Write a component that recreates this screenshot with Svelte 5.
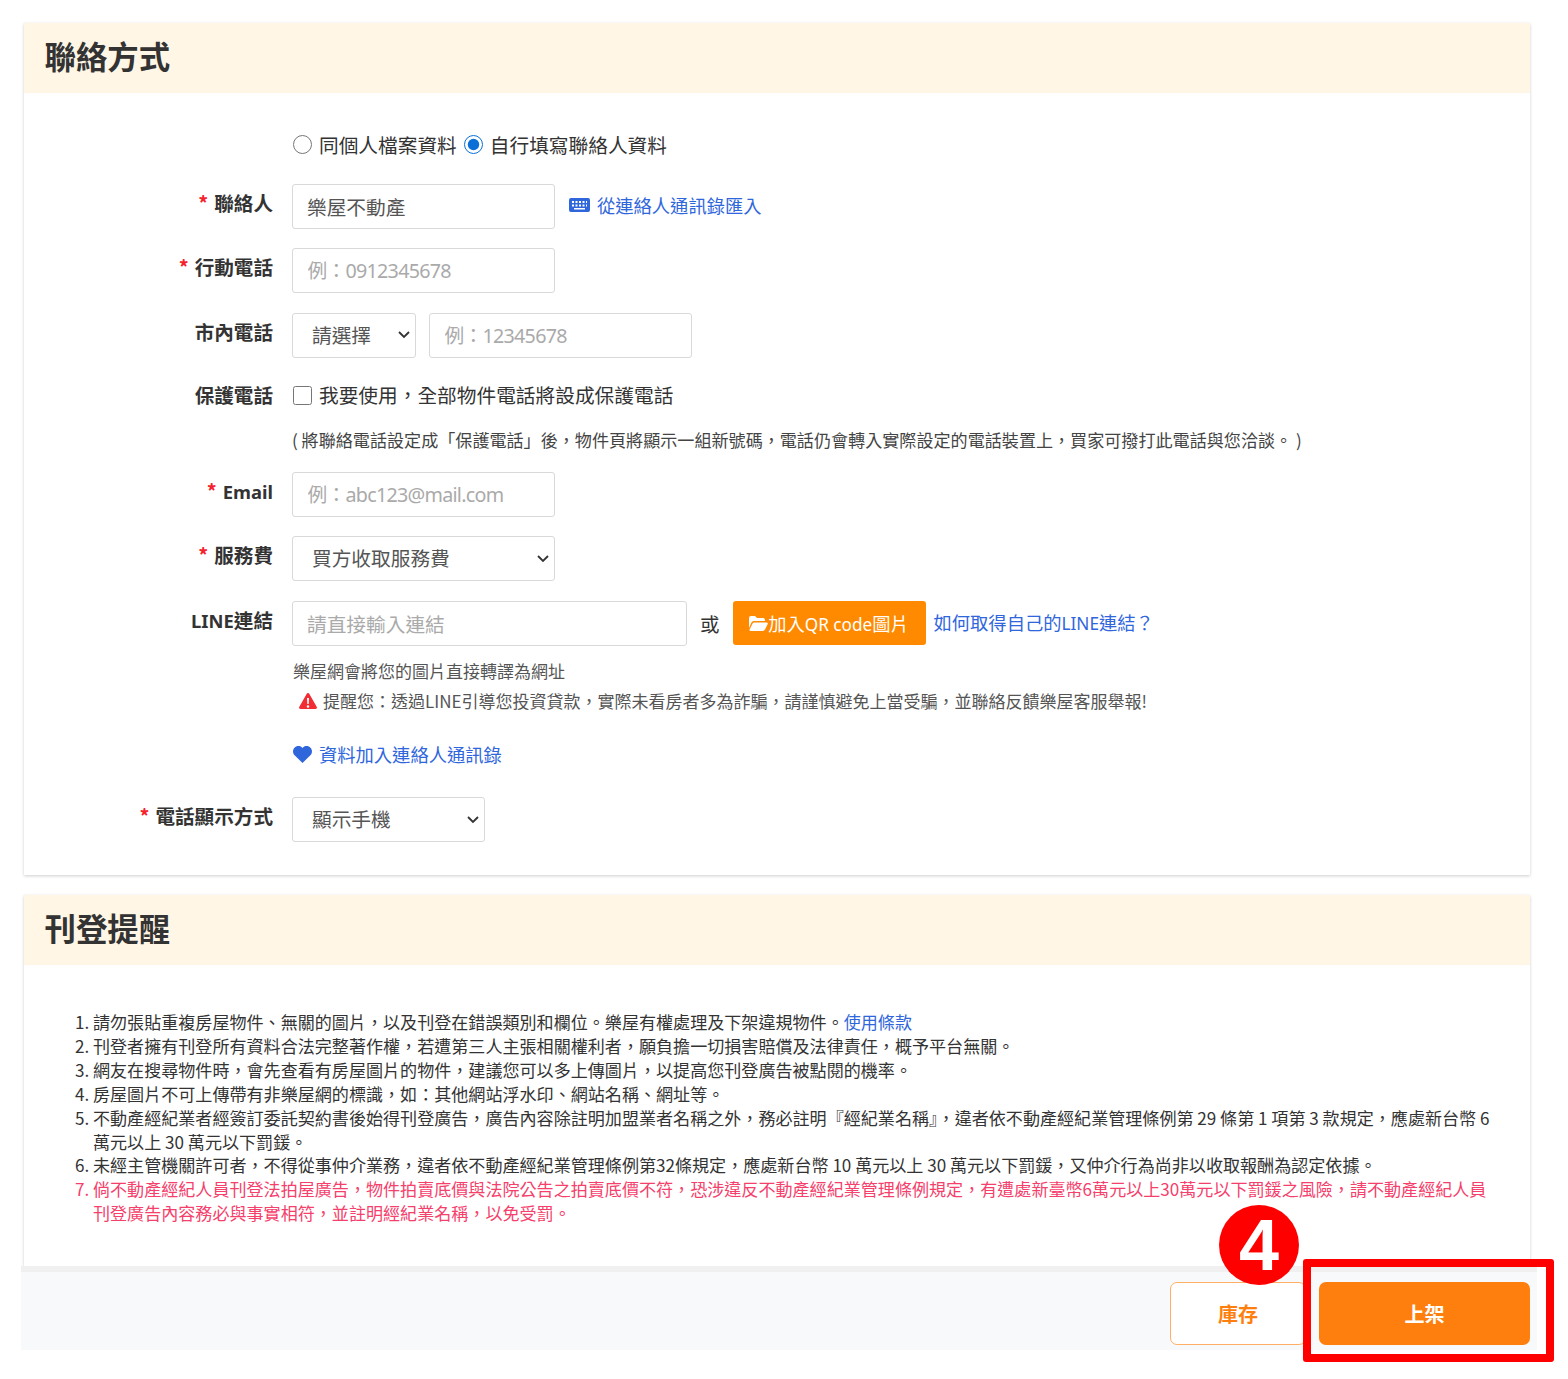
<script>
  const reminders = [
    '刊登者擁有刊登所有資料合法完整著作權，若遭第三人主張相關權利者，願負擔一切損害賠償及法律責任，概予平台無關。',
    '網友在搜尋物件時，會先查看有房屋圖片的物件，建議您可以多上傳圖片，以提高您刊登廣告被點閱的機率。',
    '房屋圖片不可上傳帶有非樂屋網的標識，如：其他網站浮水印、網站名稱、網址等。',
    '不動產經紀業者經簽訂委託契約書後始得刊登廣告，廣告內容除註明加盟業者名稱之外，務必註明『經紀業名稱』，違者依不動產經紀業管理條例第 29 條第 1 項第 3 款規定，應處新台幣 6 萬元以上 30 萬元以下罰鍰。',
    '未經主管機關許可者，不得從事仲介業務，違者依不動產經紀業管理條例第32條規定，應處新台幣 10 萬元以上 30 萬元以下罰鍰，又仲介行為尚非以收取報酬為認定依據。'
  ];
</script>

<div class="page">
  <section class="card">
    <h2>聯絡方式</h2>
    <div class="body contact">
      <div class="row radios">
        <div class="label"></div>
        <div class="ctrl">
          <label class="opt"><input type="radio" name="src" />同個人檔案資料</label>
          <label class="opt"><input type="radio" name="src" checked />自行填寫聯絡人資料</label>
        </div>
      </div>

      <div class="row">
        <div class="label"><i>*</i>聯絡人</div>
        <div class="ctrl">
          <input class="text w263" value="樂屋不動產" />
          <a class="link import" href="#top">
            <svg width="21" height="14" viewBox="0 0 21 14"><path fill="#2f66dc" fill-rule="evenodd" d="M2 0h17a2 2 0 0 1 2 2v10a2 2 0 0 1-2 2H2a2 2 0 0 1-2-2V2a2 2 0 0 1 2-2zm1 3v2h2V3zm3.500 0v2h2V3zm3.500 0v2h2V3zm3.500 0v2h2V3zm3.500 0v2h1V3zM3 6.500v2h2v-2zm3.500 0v2h2v-2zm3.500 0v2h2v-2zm3.500 0v2h2v-2zm3.500 0v2h1v-2zM5 10v1.500h11V10z"/></svg>
            從連絡人通訊錄匯入
          </a>
        </div>
      </div>

      <div class="row">
        <div class="label"><i>*</i>行動電話</div>
        <div class="ctrl"><input class="text latin w263" placeholder="例：0912345678" /></div>
      </div>

      <div class="row">
        <div class="label">市內電話</div>
        <div class="ctrl tel">
          <select class="w124"><option>請選擇</option></select>
          <input class="text latin w263" placeholder="例：12345678" />
        </div>
      </div>

      <div class="row check">
        <div class="label">保護電話</div>
        <div class="ctrl">
          <label class="opt"><input type="checkbox" />我要使用，全部物件電話將設成保護電話</label>
        </div>
      </div>

      <div class="row note">
        <div class="label"></div>
        <div class="ctrl">( 將聯絡電話設定成「保護電話」後，物件頁將顯示一組新號碼，電話仍會轉入實際設定的電話裝置上，買家可撥打此電話與您洽談。 )</div>
      </div>

      <div class="row">
        <div class="label"><i>*</i><span class="en">Email</span></div>
        <div class="ctrl"><input class="text latin w263" placeholder="例：abc123@mail.com" /></div>
      </div>

      <div class="row">
        <div class="label"><i>*</i>服務費</div>
        <div class="ctrl"><select class="w263"><option>買方收取服務費</option></select></div>
      </div>

      <div class="row line">
        <div class="label"><span class="en">LINE</span>連結</div>
        <div class="ctrl">
          <input class="text w395" placeholder="請直接輸入連結" />
          <span class="or">或</span>
          <button class="qr">
            <svg width="19" height="15" viewBox="0 0 19 15"><path fill="#fff" d="M0 2a2 2 0 0 1 2-2h4l2 2h6a2 2 0 0 1 2 2v1H5a3 3 0 0 0-2.700 1.700L0 12zM5 6.500h12.800a1 1 0 0 1 .9 1.500l-2.700 5.500a2.500 2.500 0 0 1-2.200 1.500H1.500a1 1 0 0 1-.9-1.500l2.700-5.500A2.500 2.500 0 0 1 5 6.500z"/></svg><span>加入<span class="en">QR code</span>圖片</span>
          </button>
          <a class="link how" href="#top"><span>如何取得自己的<span class="en">LINE</span>連結？</span></a>
        </div>
      </div>

      <div class="row hints">
        <div class="label"></div>
        <div class="ctrl">
          <p>樂屋網會將您的圖片直接轉譯為網址</p>
          <p class="warn">
            <svg width="18" height="16" viewBox="0 0 18 16"><path fill="#f22c33" fill-rule="evenodd" d="M9 0c.6 0 1.100.3 1.400.9l7.400 13c.5.900-.1 2.100-1.300 2.100H1.500C.3 16-.3 14.800.2 13.900L7.600.9C7.900.3 8.400 0 9 0zM8 5l.3 6h1.400L10 5zm1 7.200a1.300 1.300 0 1 0 0 2.600 1.300 1.300 0 0 0 0-2.600z"/></svg>
            提醒您：透過LINE引導您投資貸款，實際未看房者多為詐騙，請謹慎避免上當受騙，並聯絡反饋樂屋客服舉報!
          </p>
        </div>
      </div>

      <div class="row fav">
        <div class="label"></div>
        <div class="ctrl">
          <a class="link" href="#top">
            <svg width="19" height="17" viewBox="0 0 19 17"><path fill="#2f66dc" d="M9.500 17 1.600 9.300C-.5 7.200-.5 3.800 1.500 1.700 3.500-.5 6.900-.5 9 1.500l.5.500.5-.5c2.100-2 5.500-2 7.500.2 2 2.100 2 5.500-.1 7.600z"/></svg>
            資料加入連絡人通訊錄
          </a>
        </div>
      </div>

      <div class="row last">
        <div class="label"><i>*</i>電話顯示方式</div>
        <div class="ctrl"><select class="w193"><option>顯示手機</option></select></div>
      </div>
    </div>
  </section>

  <section class="card second">
    <h2>刊登提醒</h2>
    <div class="body">
      <ol>
        <li>請勿張貼重複房屋物件、無關的圖片，以及刊登在錯誤類別和欄位。樂屋有權處理及下架違規物件。<a href="#top">使用條款</a></li>
        {#each reminders as item}
          <li>{item}</li>
        {/each}
        <li class="red">倘不動產經紀人員刊登法拍屋廣告，物件拍賣底價與法院公告之拍賣底價不符，恐涉違反不動產經紀業管理條例規定，有遭處新臺幣6萬元以上30萬元以下罰鍰之風險，請不動產經紀人員刊登廣告內容務必與事實相符，並註明經紀業名稱，以免受罰。</li>
      </ol>
    </div>
  </section>

  <footer>
    <button class="ghost">庫存</button>
    <button class="publish">上架</button>
    <span class="step">4</span>
    <span class="frame"></span>
  </footer>
</div>

<style>
  :global(body) {
    margin: 0;
    background: #fff;
    font-family: "Noto Sans CJK TC", "Noto Sans", sans-serif;
    color: #333;
  }

  .page {
    padding: 23px 31px 29px 21px;
    box-sizing: border-box;
    min-height: 1379px;
  }

  .card {
    margin: 0 7px 0 3px;
    background: #fff;
    box-shadow: 0 1px 3px rgba(0, 0, 0, 0.2);
  }

  .second {
    margin-top: 20px;
  }

  h2 {
    margin: 0;
    height: 70px;
    padding-left: 20.500px;
    background: #fff6e5;
    font-size: 31.400px;
    line-height: 66px;
    font-weight: 700;
    color: #333;
  }

  .en {
    font-family: "Noto Sans", sans-serif;
    font-size: 0.94em;
  }

  .contact {
    padding: 37.800px 0 33.200px;
  }

  .row {
    display: grid;
    grid-template-columns: 249px 1fr;
    column-gap: 19px;
    margin-bottom: 19.500px;
  }

  .label {
    padding-top: 6px;
    text-align: right;
    font-size: 19.600px;
    line-height: 26px;
    font-weight: 700;
    color: #333;
  }

  .label i {
    margin-right: 6px;
    font-style: normal;
    color: #f5222d;
  }

  .ctrl {
    display: flex;
    align-items: center;
    font-size: 19.700px;
    min-width: 0;
  }

  .radios {
    height: 28px;
    margin-bottom: 25px;
  }

  .radios .label, .note .label, .hints .label, .fav .label {
    padding: 0;
  }

  .opt {
    display: inline-flex;
    align-items: center;
    line-height: 28px;
    margin-right: 6px;
  }

  .opt input {
    width: 19px;
    height: 19px;
    margin: 0 7px 0 1px;
    accent-color: #0a6fd6;
  }

  .text, select {
    height: 45px;
    box-sizing: border-box;
    border: 1px solid #d9d9d9;
    border-radius: 3px;
    background-color: #fff;
    font: inherit;
    color: #555;
  }

  .text {
    padding: 0 14px;
  }

  .text::placeholder {
    color: #aaa;
    opacity: 1;
  }

  .latin {
    font-family: "Noto Sans", "Noto Sans CJK TC", sans-serif;
    padding-left: 14.500px;
  }

  .latin::placeholder {
    letter-spacing: -0.72px;
  }

  select {
    appearance: none;
    padding: 0 26px 2px 19px;
    background-image: url("data:image/svg+xml,%3Csvg xmlns='http://www.w3.org/2000/svg' width='12' height='8' viewBox='0 0 12 8'%3E%3Cpath fill='none' stroke='%23333' stroke-width='1.800' d='M1 1l5 5 5-5'/%3E%3C/svg%3E");
    background-repeat: no-repeat;
    background-position: right 5px center;
  }

  .w263 { width: 263px; }
  .w124 { width: 124px; }
  .w193 { width: 193px; }
  .w395 { width: 395px; }

  .link {
    display: inline-flex;
    align-items: center;
    gap: 7px;
    color: #2f66dc;
    text-decoration: none;
    font-size: 18.300px;
  }

  .import {
    margin-left: 14px;
    padding-bottom: 2px;
  }

  .tel {
    gap: 13px;
  }

  .check {
    margin-bottom: 19px;
    padding-top: 5px;
  }

  .check .label {
    padding-top: 0;
    line-height: 25px;
  }

  .check .ctrl {
    height: 26px;
  }

  .note {
    margin-bottom: 18.400px;
  }

  .note .ctrl {
    font-size: 17.080px;
    line-height: 26px;
    white-space: nowrap;
    color: #444;
  }

  .or {
    margin: 0 13px;
    font-size: 19.500px;
  }

  .qr {
    display: inline-flex;
    align-items: center;
    justify-content: center;
    width: 193px;
    height: 44px;
    padding: 0;
    border: 0;
    border-radius: 3px;
    background: #ff8a00;
    color: #fff;
    font: inherit;
    font-size: 18.300px;
  }

  .how {
    margin-left: 8px;
    padding-bottom: 2px;
  }

  .line {
    margin-bottom: 10px;
  }

  .hints {
    margin-bottom: 0;
  }

  .hints .ctrl {
    display: block;
    padding-left: 1px;
    font-size: 17px;
    line-height: 30px;
    color: #555;
  }

  .hints p {
    margin: 0;
  }

  .warn {
    display: flex;
    align-items: center;
    gap: 6px;
    padding-left: 6px;
  }

  .fav {
    margin-top: 23.500px;
    margin-bottom: 28px;
    height: 30px;
  }

  .fav .ctrl {
    padding-left: 1px;
  }

  .last {
    margin-bottom: 0;
  }

  .second .body {
    padding: 44.600px 36px 40.500px 69px;
  }

  ol {
    margin: 0;
    padding: 0;
    font-size: 17.070px;
    line-height: 23.900px;
    color: #333;
  }

  ol a {
    color: #2f66dc;
    text-decoration: none;
  }

  .red {
    color: #f5406c;
  }

  footer {
    position: relative;
    display: flex;
    justify-content: flex-end;
    gap: 13px;
    height: 78px;
    margin-top: 6px;
    padding: 10px 7px 0 0;
    box-sizing: border-box;
    background: #f8f9fb;
    box-shadow: 0 -6px 0 #f0f0f0;
  }

  footer button {
    height: 63px;
    border-radius: 7px;
    font: inherit;
    font-size: 20px;
    font-weight: 700;
  }

  .ghost {
    width: 136px;
    border: 1px solid #ffb066;
    background: #fff;
    color: #ff7f0e;
  }

  .publish {
    width: 211px;
    border: 0;
    background: #ff7f0e;
    color: #fff;
  }

  .step {
    position: absolute;
    right: 238px;
    top: -67px;
    width: 80px;
    height: 80px;
    border-radius: 50%;
    background: #f00;
    color: #fff;
    font-family: "Liberation Sans", sans-serif;
    font-size: 72px;
    font-weight: 700;
    line-height: 80px;
    text-align: center;
  }

  .frame {
    position: absolute;
    right: -17px;
    top: -13px;
    width: 235px;
    height: 87px;
    border: 8px solid #f00;
    border-radius: 3px;
  }
</style>
